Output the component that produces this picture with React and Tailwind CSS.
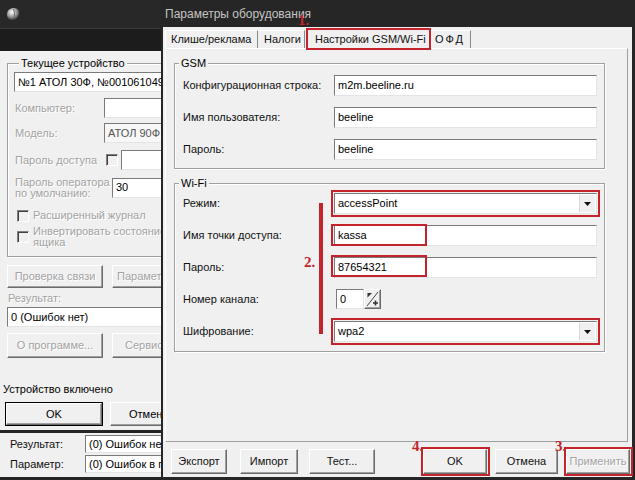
import React from 'react';

const sunken = 'border border-t-[#7a7a7a] border-l-[#7a7a7a] border-r-[#e4e4e4] border-b-[#e4e4e4] bg-white';
const raised = 'border border-t-white border-l-white border-r-[#6b6b6b] border-b-[#6b6b6b] bg-[#f0f0f0] shadow-[inset_-1px_-1px_0_#a0a0a0]';
const dim = 'text-[#a3a3a3] [text-shadow:1px_1px_0_#fff]';

const Input = ({ className = '', children }) => (
    <div className={`${sunken} shrink-0 flex items-center pl-[3px] text-[11px] text-black whitespace-nowrap overflow-hidden ${className}`}>
        {children}
    </div>
);

const Button = ({ className = '', children }) => (
    <div className={`${raised} shrink-0 flex items-center justify-center text-[11px] whitespace-nowrap overflow-hidden ${className}`}>
        {children}
    </div>
);

const Group = ({ title, legend = 'left-[4px]', className = '', children }) => (
    <div className={`relative shrink-0 border border-[#a0a0a0] shadow-[inset_1px_1px_0_#fff,1px_1px_0_#fff] ${className}`}>
        <span className={`absolute -top-[8px] px-[2px] bg-[#f0f0f0] text-[11px] leading-[14px] text-black whitespace-nowrap ${legend}`}>{title}</span>
        {children}
    </div>
);

const Check = () => (
    <div className="w-[12px] h-[12px] shrink-0 border border-t-[#808080] border-l-[#808080] border-r-white border-b-white bg-[#f0f0f0] shadow-[inset_1px_1px_0_#404040]" />
);

const Label = ({ children }) => <span className="text-[11px] text-[#111] whitespace-nowrap">{children}</span>;

const Arrow = () => (
    <div className="ml-auto mr-[1px] w-[16px] h-[17px] flex items-center justify-center bg-[#f0f0f0] border-l border-[#d8d8d8]">
        <svg width="7" height="4" viewBox="0 0 7 4"><path d="M0 0H7L3.5 4Z" fill="#111" /></svg>
    </div>
);

const RedBox = ({ className }) => <span className={`absolute border-2 border-[#c3242c] pointer-events-none ${className}`} />;

const Note = ({ className, children }) => (
    <span className={`absolute text-[15px] leading-[15px] font-bold text-[#c3242c] font-['Liberation_Serif',serif] ${className}`}>{children}</span>
);

const AppIcon = () => (
    <svg width="16" height="16" viewBox="0 0 16 16">
        <defs>
            <radialGradient id="g" cx="40%" cy="35%" r="65%">
                <stop offset="0" stopColor="#ffffff" />
                <stop offset="0.6" stopColor="#9a9a9a" />
                <stop offset="1" stopColor="#3c3c3c" />
            </radialGradient>
        </defs>
        <path d="M2 9C2 4 5 2 9 2C13 2 15 5 14 9C13 13 10 14 7 14C4 14 2 12 2 9Z" fill="url(#g)" />
        <path d="M8 3C10 5 10 10 8 13" stroke="#5a5a5a" strokeWidth="0.8" fill="none" />
    </svg>
);

const Tab = ({ className = '', children }) => (
    <div className={`h-[18px] flex items-center text-[11px] text-[#111] border-t border-l border-t-white border-l-white border-r border-r-[#8a8a8a] whitespace-nowrap ${className}`}>
        {children}
    </div>
);

function BackWindow() {
    return (
        <div className="absolute left-0 top-0 w-[161px] h-[433px] overflow-hidden flex flex-col bg-[#222] border-b-[3px] border-[#242424]">
            <div className="h-[28px] shrink-0 bg-[#282828] flex items-center pl-[5px]">
                <AppIcon />
            </div>
            <div className="h-[23px] shrink-0 bg-[#1c1c1c] border-t border-[#3a3a3a]" />
            <div className="flex-1 w-[200px] bg-[#f0f0f0] flex flex-col">
                <Group title="Текущее устройство" legend="left-[11px]" className="ml-[7px] mt-[12px] h-[194px] w-[185px] flex flex-col">
                    <Input className="ml-[6px] mt-[8px] h-[20px] w-[170px]">№1 АТОЛ 30Ф, №00106104998</Input>
                    <div className="mt-[6px] h-[20px] flex items-center">
                        <span className={`ml-[7px] w-[89px] shrink-0 text-[11px] ${dim}`}>Компьютер:</span>
                        <Input className="h-[20px] w-[80px]" />
                    </div>
                    <div className="mt-[5px] h-[20px] flex items-center">
                        <span className={`ml-[7px] w-[89px] shrink-0 text-[11px] ${dim}`}>Модель:</span>
                        <Input className="h-[20px] w-[80px] !bg-[#f7f7f7] !text-[#555]">АТОЛ 90Ф</Input>
                    </div>
                    <div className="mt-[7px] h-[20px] flex items-center">
                        <span className={`ml-[7px] w-[91px] shrink-0 text-[11px] whitespace-nowrap ${dim}`}>Пароль доступа</span>
                        <Check />
                        <Input className="ml-[3px] h-[20px] w-[60px]" />
                    </div>
                    <div className="mt-[7px] h-[21px] flex items-center">
                        <span className={`ml-[7px] w-[97px] shrink-0 text-[11px] leading-[11px] ${dim}`}>Пароль оператора<br />по умолчанию:</span>
                        <Input className="h-[20px] w-[60px]">30</Input>
                    </div>
                    <div className="mt-[11px] h-[13px] flex items-center gap-[4px] pl-[9px]">
                        <Check />
                        <span className={`text-[11px] whitespace-nowrap ${dim}`}>Расширенный журнал</span>
                    </div>
                    <div className="mt-[4px] h-[22px] flex items-center gap-[4px] pl-[9px]">
                        <Check />
                        <span className={`text-[11px] leading-[11px] whitespace-nowrap ${dim}`}>Инвертировать состояние<br />ящика</span>
                    </div>
                </Group>
                <div className="mt-[8px] h-[23px] flex">
                    <Button className={`ml-[7px] w-[96px] h-full ${dim}`}>Проверка связи</Button>
                    <Button className={`ml-[9px] w-[80px] h-full !justify-start pl-[4px] ${dim}`}>Параметры</Button>
                </div>
                <span className={`mt-[4px] ml-[8px] h-[13px] leading-[13px] text-[11px] ${dim}`}>Результат:</span>
                <Input className="mt-[2px] ml-[7px] h-[20px] w-[175px]">0 (Ошибок нет)</Input>
                <div className="mt-[6px] h-[25px] flex">
                    <Button className={`ml-[7px] w-[96px] h-full ${dim}`}>О программе...</Button>
                    <Button className={`ml-[9px] w-[80px] h-full !justify-start pl-[12px] ${dim}`}>Сервис</Button>
                </div>
                <span className="mt-[25px] ml-[3px] h-[13px] leading-[13px] text-[11px] text-black">Устройство включено</span>
                <div className="mt-[6px] h-[24px] flex">
                    <div className="ml-[5px] w-[98px] shrink-0 h-full border border-black">
                        <Button className="w-full h-full text-black">OK</Button>
                    </div>
                    <Button className="ml-[7px] w-[80px] h-full !justify-start pl-[18px] text-black">Отмена</Button>
                </div>
            </div>
        </div>
    );
}

function BottomWindow() {
    return (
        <div className="absolute left-0 top-[433px] w-[161px] h-[47px] overflow-hidden bg-[#f0f0f0] border-b-[3px] border-[#242424] flex flex-col gap-[2px] pt-[2px]">
            <div className="h-[18px] flex items-center">
                <span className="ml-[10px] w-[75px] shrink-0 text-[11px] text-[#111]">Результат:</span>
                <Input className="h-[18px] w-[90px]">(0) Ошибок нет</Input>
            </div>
            <div className="h-[18px] flex items-center">
                <span className="ml-[10px] w-[75px] shrink-0 text-[11px] text-[#111]">Параметр:</span>
                <Input className="h-[18px] w-[90px]">(0) Ошибок в параметрах</Input>
            </div>
        </div>
    );
}

function Dialog() {
    return (
        <div className="absolute left-[161px] top-0 w-[474px] h-[480px] bg-[#262626] flex flex-col">
            <div className="h-[27px] flex items-center pl-[4px] text-[12px] text-[#c4c4c4] relative">
                Параметры оборудования
                <Note className="left-[137px] top-[13px]">1.</Note>
            </div>
            <div className="flex-1 ml-[2px] mr-[3px] mb-[3px] bg-[#f0f0f0] flex flex-col">
                {/* tabs */}
                <div className="h-[21px] flex items-end pl-[2px] relative z-10">
                    <Tab className="w-[93px] pl-[5px]">Клише/реклама</Tab>
                    <Tab className="w-[47px] pl-[6px] !border-l-0">Налоги</Tab>
                    <div className="relative ml-[2px] w-[123px] h-[21px] -mb-px bg-[#f0f0f0] border-t border-l border-t-white border-l-white border-r border-r-[#8a8a8a] flex items-center pl-[7px] text-[11px] text-[#111] whitespace-nowrap">
                        Настройки GSM/Wi-Fi
                        <RedBox className="-left-[2px] -top-[1px] w-[125px] h-[22px]" />
                    </div>
                    <Tab className="w-[41px] pl-[5px] !border-l-0 tracking-[2px]">ОФД</Tab>
                </div>

                {/* tab panel */}
                <div className="ml-[2px] mr-[4px] h-[394px] border border-t-white border-l-white border-r-[#a0a0a0] border-b-[#a0a0a0] flex flex-col">
                    <Group title="GSM" className="ml-[8px] mt-[14px] w-[431px] h-[106px] pt-[11px] pl-[8px]">
                        <div className="grid grid-cols-[151px_263px] gap-y-[11px] items-center">
                            <Label>Конфигурационная строка:</Label>
                            <Input className="h-[21px]">m2m.beeline.ru</Input>
                            <Label>Имя пользователя:</Label>
                            <Input className="h-[21px]">beeline</Input>
                            <Label>Пароль:</Label>
                            <Input className="h-[21px]">beeline</Input>
                        </div>
                    </Group>

                    <Group title="Wi-Fi" className="ml-[8px] mt-[14px] w-[431px] h-[169px] pt-[9px] pl-[8px]">
                        <span className="absolute left-[144px] top-[19px] w-[4px] h-[131px] bg-[#c3242c]" />
                        <Note className="left-[129px] top-[71px]">2.</Note>
                        <div className="grid grid-cols-[151px_263px] gap-y-[11px] items-center">
                            <Label>Режим:</Label>
                            <div className="relative">
                                <Input className="h-[21px] pr-0">accessPoint<Arrow /></Input>
                                <RedBox className="-inset-[3px]" />
                            </div>
                            <Label>Имя точки доступа:</Label>
                            <div className="relative">
                                <Input className="h-[21px]">kassa</Input>
                                <RedBox className="-left-[3px] -top-[1px] w-[96px] h-[22px]" />
                            </div>
                            <Label>Пароль:</Label>
                            <div className="relative">
                                <Input className="h-[21px]">87654321</Input>
                                <RedBox className="-left-[3px] -top-[2px] w-[96px] h-[22px]" />
                            </div>
                            <Label>Номер канала:</Label>
                            <div className="flex h-[21px] pl-[2px]">
                                <Input className="w-[28px] h-[20px]">0</Input>
                                <div className={`${raised} w-[17px] h-[20px] flex items-center justify-center`}>
                                    <svg width="13" height="16" viewBox="0 0 13 16">
                                        <line x1="1" y1="15" x2="12" y2="1" stroke="#444" />
                                        <path d="M1.5 2H6L1.5 6.5Z" fill="#333" />
                                        <path d="M7 12H12M9.5 9.5V14.5" stroke="#333" strokeWidth="1.6" />
                                    </svg>
                                </div>
                            </div>
                            <Label>Шифрование:</Label>
                            <div className="relative">
                                <Input className="h-[21px] pr-0">wpa2<Arrow /></Input>
                                <RedBox className="-inset-[3px]" />
                            </div>
                        </div>
                    </Group>
                </div>

                {/* buttons */}
                <div className="flex pt-[7px] relative">
                    <Button className="ml-[8px] w-[56px] h-[25px] text-[#111]">Экспорт</Button>
                    <Button className="ml-[13px] w-[58px] h-[25px] text-[#111]">Импорт</Button>
                    <Button className="ml-[11px] w-[66px] h-[25px] text-[#111]">Тест...</Button>
                    <div className="relative ml-[48px]">
                        <Button className="w-[64px] h-[25px] text-[#111]">OK</Button>
                        <RedBox className="-inset-[2px] -right-[3px]" />
                        <Note className="-left-[11px] -top-[10px]">4.</Note>
                    </div>
                    <Button className="ml-[8px] w-[63px] h-[25px] text-[#111]">Отмена</Button>
                    <div className="relative ml-[8px]">
                        <Button className={`w-[64px] h-[25px] ${dim}`}>Применить</Button>
                        <RedBox className="-inset-[2px] -right-[3px]" />
                        <Note className="-left-[11px] -top-[10px]">3.</Note>
                    </div>
                </div>
            </div>
        </div>
    );
}

export default function App() {
    return (
        <div className="relative w-[635px] h-[480px] overflow-hidden bg-[#1e1e1e] font-['Liberation_Sans',Arial,sans-serif]">
            <BackWindow />
            <BottomWindow />
            <Dialog />
        </div>
    );
}
